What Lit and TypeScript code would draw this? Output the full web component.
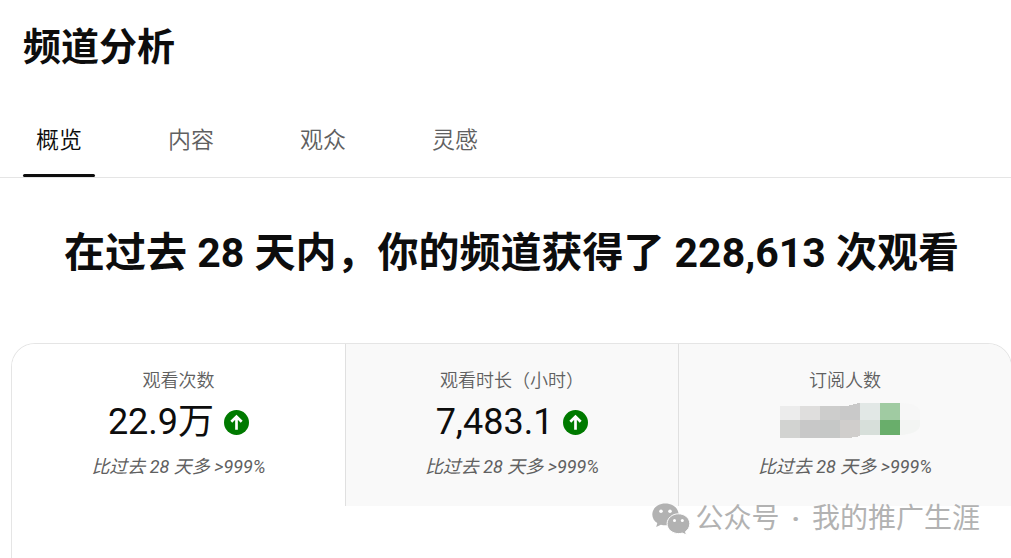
import { LitElement, html, css, svg, nothing } from "lit";
import { customElement, state } from "lit/decorators.js";

interface Metric {
  id: string;
  label: string;
  value: string | null;
  delta: string;
}

const TABS = ["概览", "内容", "观众", "灵感"];

const METRICS: Metric[] = [
  { id: "views", label: "观看次数", value: "22.9万", delta: "比过去 28 天多 >999%" },
  { id: "hours", label: "观看时长（小时）", value: "7,483.1", delta: "比过去 28 天多 >999%" },
  { id: "subs", label: "订阅人数", value: null, delta: "比过去 28 天多 >999%" },
];

const arrowUp = html`
  <svg class="arrow" viewBox="0 0 26 26" role="img" aria-label="上升">
    <circle cx="13" cy="13" r="13" fill="#007a00" />
    <path d="M13 20.5V7M7.6 12.2 13 6.8l5.4 5.4" fill="none" stroke="#fff" stroke-width="2.8" />
  </svg>
`;

const BLOCKS: [number, number, number, number, string][] = [
  [0, 3, 20, 14, "#ececec"],
  [20, 3, 20, 14, "#dfdedd"],
  [40, 3, 20, 14, "#cdcdcc"],
  [0, 17, 20, 18, "#d2d3d1"],
  [20, 17, 20, 18, "#c8c8c8"],
  [40, 17, 20, 18, "#c6c8c7"],
  [80, 0, 20, 17, "#e2e8e6"],
  [80, 17, 20, 15, "#d7dfda"],
  [100, 0, 20, 17, "#a0cba2"],
  [100, 17, 20, 15, "#69ae6b"],
];

const mosaic = html`
  <svg class="mosaic" viewBox="0 0 130 39" role="img" aria-label="已隐藏">
    ${BLOCKS.map(
      ([x, y, w, h, fill]) => svg`<rect x=${x} y=${y} width=${w} height=${h} fill=${fill} />`
    )}
    <path d="M60 3h9V2h4V1h4V0h3v17H60z" fill="#c9c9c9" />
    <path d="M60 17h20v16h-2v1h-6v1H60z" fill="#d0cecc" />
    <path d="M120 0q18 0 20 8v9h-20z" fill="#f7f7f7" />
    <path d="M120 17h20v6q-2 8-20 9z" fill="#f3f5f3" />
  </svg>
`;

@customElement("metric-card")
export class MetricCard extends LitElement {
  static properties = { metric: { attribute: false } };
  declare metric: Metric;

  static styles = css`
    :host {
      display: flex;
      min-width: 0;
    }
    .card {
      flex: 1;
      display: flex;
      flex-direction: column;
      align-items: center;
      padding: 25px 8px 27px;
      border: 0;
      background: none;
      font-family: inherit;
      color: #606060;
      cursor: pointer;
    }
    .label,
    .delta {
      font-size: 18px;
      line-height: 24px;
    }
    .label {
      font-weight: 350;
    }
    .delta {
      font-style: italic;
      font-weight: 400;
    }
    .value {
      display: flex;
      align-items: center;
      justify-content: center;
      gap: 10px;
      height: 48px;
      margin: 5px 0 9px;
      font-size: 36px;
      line-height: 48px;
      font-weight: 400;
      color: #0d0d0d;
    }
    .arrow {
      width: 25px;
      height: 25px;
    }
    .mosaic {
      width: 130px;
      height: 39px;
      overflow: visible;
    }
  `;

  render() {
    const m = this.metric;
    return html`
      <button class="card" type="button">
        <span class="label">${m.label}</span>
        <span class="value">
          ${m.value === null ? mosaic : html`<span>${m.value}</span>${arrowUp}`}
        </span>
        <span class="delta">${m.delta}</span>
      </button>
    `;
  }
}

@customElement("app-root")
export class AppRoot extends LitElement {
  @state() private tab = 0;
  @state() private metric = 0;

  static styles = css`
    :host {
      display: flex;
      flex-direction: column;
      position: relative;
      box-sizing: border-box;
      min-height: 100vh;
      overflow: hidden;
      background: #fff;
      color: #0d0d0d;
      font-family: Roboto, "Noto Sans CJK SC", sans-serif;
    }
    .title {
      margin: 0;
      padding: 25px 23px 34px;
      font-size: 38px;
      line-height: 44px;
      font-weight: 700;
    }
    .tabs {
      display: flex;
      gap: 60px;
      padding: 0 23px;
      border-bottom: 1px solid #e5e5e5;
    }
    .tab {
      position: relative;
      display: grid;
      align-items: center;
      height: 74px;
      padding: 2px 13px 0;
      border: 0;
      background: none;
      font-family: inherit;
      font-size: 23px;
      line-height: 32px;
      font-weight: 350;
      color: #606060;
      cursor: pointer;
    }
    .tab.active {
      color: #0d0d0d;
    }
    .tab.active::after {
      content: "";
      position: absolute;
      inset: auto 0 0;
      height: 3px;
      border-radius: 2px;
      background: #0d0d0d;
    }
    .headline {
      margin: 0;
      padding: 50px 24px 65px 36px;
      font-size: 41px;
      line-height: 50px;
      font-weight: 700;
      text-align: center;
    }
    .panel {
      flex: 1;
      margin: 0 -1px 0 11px;
      border: 1px solid #e5e5e5;
      border-bottom: 0;
      border-radius: 24px 24px 0 0;
      overflow: hidden;
    }
    .metrics {
      display: grid;
      grid-template-columns: repeat(3, 1fr);
    }
    .metric {
      background: #f9f9f9;
    }
    .metric.active {
      background: #fff;
    }
    .metric + .metric {
      border-left: 1px solid #e0e0e0;
    }
    .watermark {
      position: absolute;
      right: 31px;
      bottom: 19px;
      display: flex;
      align-items: center;
      gap: 6px;
      font-size: 28px;
      line-height: 40px;
      color: #b2b2b2;
    }
    .names {
      display: flex;
      gap: 12px;
    }
    .dot {
      font-weight: 700;
    }
    .wechat {
      width: 38px;
      height: 32px;
    }
  `;

  render() {
    return html`
      <h1 class="title">频道分析</h1>
      <nav class="tabs" role="tablist">
        ${TABS.map(
          (name, i) => html`
            <button
              class="tab ${i === this.tab ? "active" : ""}"
              type="button"
              role="tab"
              aria-selected=${i === this.tab}
              @click=${() => (this.tab = i)}
            >${name}</button>
          `
        )}
      </nav>
      <h2 class="headline">在过去 28 天内，你的频道获得了 228,613 次观看</h2>
      <section class="panel">
        <div class="metrics">
          ${METRICS.map(
            (m, i) => html`
              <metric-card
                class="metric ${i === this.metric ? "active" : ""}"
                .metric=${m}
                aria-current=${i === this.metric ? "true" : nothing}
                @click=${() => (this.metric = i)}
              ></metric-card>
            `
          )}
        </div>
      </section>
      <div class="watermark">
        <svg class="wechat" viewBox="0 0 38 32" aria-hidden="true">
          <path
            d="M13.3.5C6 .5.3 5.300.3 11.500c0 3.600 1.900 6.600 5 8.600L4.200 24l4.700-2.300c1.500.4 3 .6 4.600.6 7.300 0 13.100-4.800 13.100-10.900S20.700.5 13.300.5z"
            fill="#b2b2b2"
          />
          <circle cx="9" cy="8.200" r="1.800" fill="#fff" />
          <circle cx="18" cy="8.200" r="1.800" fill="#fff" />
          <path
            d="M26.500 10.800c-6.300 0-11.400 4.400-11.400 9.900s5.100 9.900 11.400 9.900c1.300 0 2.600-.2 3.800-.5l4.100 1.800-.9-3.300c2.600-1.800 4.300-4.600 4.300-7.900 0-5.500-5-9.900-11.300-9.900z"
            fill="#b2b2b2"
            stroke="#fff"
            stroke-width="1"
          />
          <circle cx="22.500" cy="17.600" r="1.500" fill="#fff" />
          <circle cx="30.300" cy="17.600" r="1.500" fill="#fff" />
        </svg>
        <span class="names"><span>公众号</span><span class="dot">·</span><span>我的推广生涯</span></span>
      </div>
    `;
  }
}
